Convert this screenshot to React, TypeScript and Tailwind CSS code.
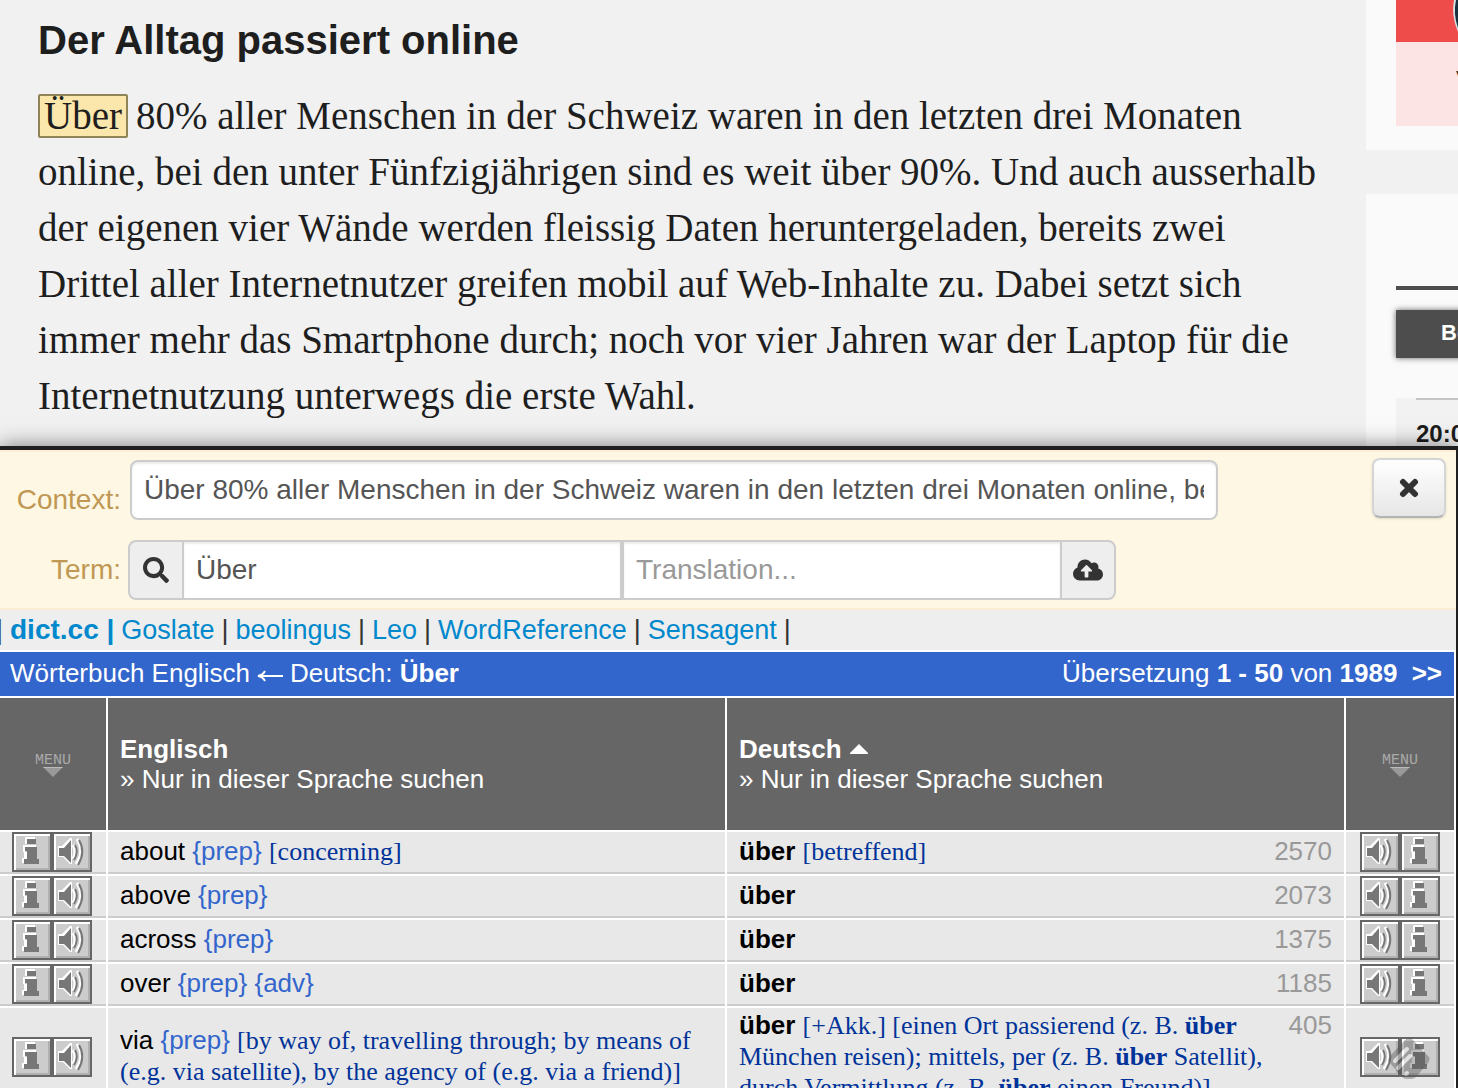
import type { ReactNode } from "react";
import { FaCloudUploadAlt, FaSearch, FaTimes } from "react-icons/fa";

const SANS = "font-['Liberation_Sans',Arial,sans-serif]";
const SERIF = "font-['Liberation_Serif','Times_New_Roman',serif]";

const article = [
  "online, bei den unter Fünfzigjährigen sind es weit über 90%. Und auch ausserhalb",
  "der eigenen vier Wände werden fleissig Daten heruntergeladen, bereits zwei",
  "Drittel aller Internetnutzer greifen mobil auf Web-Inhalte zu. Dabei setzt sich",
  "immer mehr das Smartphone durch; noch vor vier Jahren war der Laptop für die",
  "Internetnutzung unterwegs die erste Wahl.",
];

function InfoGlyph() {
  return (
    <svg viewBox="0 0 36 36" className="h-9 w-9" aria-hidden="true">
      <path d="M0 0H36V36H0Z" fill="#ccc" />
      <path d="M0 0H36V2H2V36H0Z" fill="#fff" />
      <path d="M34 2H36V36H2V34H34Z" fill="#b0b0b0" />
      <path d="M11 3H21V6H13V10H11ZM9 11H22V14H11V18H9ZM10 18H13V26H10ZM8 24H11V29H8Z" fill="#fff" />
      <path d="M13 5H22V10H13ZM11 13H23V25H25V30H10V25H13V17H11Z" fill="#777" />
    </svg>
  );
}

function SoundGlyph() {
  return (
    <svg viewBox="0 0 36 36" className="h-9 w-9" aria-hidden="true">
      <path d="M0 0H36V36H0Z" fill="#ccc" />
      <path d="M0 0H36V2H2V36H0Z" fill="#fff" />
      <path d="M34 2H36V36H2V34H34Z" fill="#b0b0b0" />
      <path d="M4 12H8L16 4H18V30H16L9 23H4Z" fill="#fff" />
      <path d="M5 14H10L17 6V29L10 22H5Z" fill="#777" />
      <path d="M19 11Q23 18 19 25M23 5Q31 18 22 30" fill="none" stroke="#fff" strokeWidth="3" />
      <path d="M21 11Q25 18 20 26M25 6Q32 18 24 31" fill="none" stroke="#777" strokeWidth="2" />
    </svg>
  );
}

function Actions({ flip = false }: { flip?: boolean }) {
  return (
    <div className={`mx-auto flex h-10 w-20 justify-between bg-[#666] p-[2px] ${flip ? "flex-row-reverse" : ""}`}>
      <button type="button" aria-label="Information"><InfoGlyph /></button>
      <button type="button" aria-label="Anhören"><SoundGlyph /></button>
    </div>
  );
}

function MenuButton() {
  return (
    <button type="button" className="mx-auto flex flex-col items-center pt-1 text-[#aaa]">
      <span className="font-['Liberation_Mono',monospace] text-[15px] leading-3">MENU</span>
      <svg viewBox="0 0 20 10" className="h-[10px] w-5" aria-hidden="true">
        <path d="M0 0H20L10 10Z" fill="#999" />
        <path d="M0 0H20L19 1H1Z" fill="#bbb" />
      </svg>
    </button>
  );
}

const Tag = ({ children }: { children: ReactNode }) => <span className="text-[#3366cc]">{children}</span>;
const Note = ({ children }: { children: ReactNode }) => (
  <span className={`${SERIF} text-[#003399]`}>{children}</span>
);

const rows: { en: ReactNode; de: ReactNode; count: number }[] = [
  { en: <>about <Tag>{"{prep}"}</Tag> <Note>[concerning]</Note></>, de: <><b>über</b> <Note>[betreffend]</Note></>, count: 2570 },
  { en: <>above <Tag>{"{prep}"}</Tag></>, de: <b>über</b>, count: 2073 },
  { en: <>across <Tag>{"{prep}"}</Tag></>, de: <b>über</b>, count: 1375 },
  { en: <>over <Tag>{"{prep} {adv}"}</Tag></>, de: <b>über</b>, count: 1185 },
  {
    en: <>via <Tag>{"{prep}"}</Tag> <Note>[by way of, travelling through; by means of (e.g. via satellite), by the agency of (e.g. via a friend)]</Note></>,
    de: <><b>über</b> <Note>[+Akk.] [einen Ort passierend (z. B. <b>über</b> München reisen); mittels, per (z. B. <b>über</b> Satellit), durch Vermittlung (z. B. <b>über</b> einen Freund)]</Note></>,
    count: 405,
  },
];

const CELL = "border-r-2 border-b-2 border-white bg-[#e8e8e8] align-middle shadow-[inset_0_-2px_0_#ccc]";
const HEAD = "h-[134px] border-r-2 border-b-2 border-white bg-[#666] text-left align-middle font-normal text-white";
const FIELD = "h-[60px] min-w-0 border-2 border-[#ccc] bg-white px-3 text-[28px] text-[#555] shadow-[inset_0_2px_2px_rgba(0,0,0,0.08)] outline-none placeholder:text-[#999]";
const ADDON = "flex h-[60px] w-14 shrink-0 items-center justify-center border-2 border-[#ccc] bg-[#eee] text-[#333]";
const LABEL = "w-[121px] shrink-0 text-right text-[28px] leading-10 text-[#c09853]";

function Sidebar() {
  return (
    <aside className="w-[92px] shrink-0 overflow-hidden whitespace-nowrap">
      <div className="h-[150px] bg-[#fafafa] pl-[30px]">
        <div className="flex h-[42px] justify-end overflow-hidden bg-[#ee4b4b]">
          <svg viewBox="0 0 6 36" className="h-9 w-[6px]" aria-hidden="true">
            <path d="M6 0H2Q-1 16 6 32Z" fill="#d7dde0" />
            <path d="M6 0H4Q1 14 6 28Z" fill="#17313f" />
          </svg>
        </div>
        <div className="h-[84px] bg-[#fce4e4] pt-5 pl-[60px] text-[22px] text-[#333]">V</div>
      </div>
      <div className="mt-11 h-[252px] bg-[#fafafa] pt-[92px] pl-[30px]">
        <div className="h-1 bg-[#4d4d4d]" />
        <button type="button" className="mt-5 block h-12 w-[200px] bg-[#4d4d4d] pb-1 pl-[45px] text-left text-[22px] font-bold text-white shadow-[0_0_6px_rgba(0,0,0,0.6)]">Bo</button>
        <div className="mt-10 bg-[#f2f2f2] pl-5">
          <div className="h-[48px] border-t-2 border-[#c4c4c4] pt-[18px] text-2xl leading-8 font-bold text-[#1c1c1c]">20:0</div>
        </div>
      </div>
    </aside>
  );
}

export default function App() {
  return (
    <div className={`flex h-screen flex-col overflow-hidden bg-[#f1f1f1] ${SANS}`}>
      <div className="flex h-[446px] shrink-0 justify-between">
        <article className="min-w-0 pt-4 pl-[38px] text-[#1e1e1e]">
          <h1 className="text-[40px] leading-[48px] font-bold">Der Alltag passiert online</h1>
          <p className={`mt-6 text-[39px] leading-[56px] whitespace-nowrap ${SERIF}`}>
            <mark className="mr-2 inline-block h-11 rounded-[2px] border-2 border-[#8f8358] bg-[#fbe6ab] px-1 leading-10 text-[#1e1e1e]">Über</mark>
            80% aller Menschen in der Schweiz waren in den letzten drei Monaten
            {article.map((line) => (
              <span key={line}><br />{line}</span>
            ))}
          </p>
        </article>
        <Sidebar />
      </div>

      <section className="relative shrink-0 border-t-4 border-r-2 border-[#202020] bg-white shadow-[0_0_20px_rgba(0,0,0,0.5)]">
        <form className="flex h-40 items-start justify-between border-y-2 border-[#fbeed5] bg-[#fdf7e3] pt-[6px] pr-[10px]">
          <div className="flex flex-col gap-5 pt-[2px]">
            <div className="flex items-center gap-[9px]">
              <label htmlFor="context" className={`${LABEL} pt-5`}>Context:</label>
              <input id="context" className={`${FIELD} w-[1088px] rounded-lg`} defaultValue="Über 80% aller Menschen in der Schweiz waren in den letzten drei Monaten online, bei den unter Fünfzigjährigen" />
            </div>
            <div className="flex items-center gap-[7px]">
              <label htmlFor="term" className={LABEL}>Term:</label>
              <div className="flex">
                <button type="button" aria-label="Search" className={`${ADDON} rounded-l-lg`}><FaSearch size={26} /></button>
                <input id="term" className={`${FIELD} -ml-[2px] w-[440px]`} defaultValue="Über" />
                <input aria-label="Translation" className={`${FIELD} w-[440px]`} placeholder="Translation..." />
                <button type="button" aria-label="Save" className={`${ADDON} -ml-[2px] rounded-r-lg`}><FaCloudUploadAlt size={30} /></button>
              </div>
            </div>
          </div>
          <button type="button" aria-label="Close" className="flex h-[60px] w-[74px] shrink-0 items-center justify-center rounded-lg border-2 border-[#d5d5d5] border-b-[#b3b3b3] bg-linear-to-b from-white to-[#e6e6e6] text-[#333] shadow-sm">
            <svg viewBox="0 0 20 20" className="h-5 w-5" aria-hidden="true">
              <path d="M4 4L16 16M16 4L4 16" stroke="currentColor" strokeWidth="6" strokeLinecap="round" />
            </svg>
          </button>
        </form>

        <nav className="flex h-10 items-center gap-[7px] bg-[#eee] text-[27px] text-[#0088cc]">
          <span className="-ml-1 text-[#333]">|</span>
          <a href="#dict" className="text-[28px] font-bold">dict.cc |</a>
          {["Goslate", "beolingus", "Leo", "WordReference", "Sensagent"].map((name) => (
            <span key={name} className="flex gap-[7px]">
              <a href={`#${name}`}>{name}</a>
              <span className="text-[#333]">|</span>
            </span>
          ))}
        </nav>

        <div className="mt-[2px] mr-[2px] mb-[2px] flex h-11 items-center justify-between bg-[#3366cc] pr-3 pb-[2px] pl-[10px] text-[26px] text-white">
          <span className="flex items-center gap-[7px]">
            Wörterbuch Englisch
            <svg viewBox="0 0 26 12" className="mt-[6px] h-3 w-[26px]" role="img" aria-label="von">
              <path d="M26 6H3M8 1Q6 5 1 6Q6 7 8 11" fill="none" stroke="#fff" strokeWidth="2" />
            </svg>
            <span>Deutsch: <b>Über</b></span>
          </span>
          <span>Übersetzung <b>1 - 50</b> von <b>1989</b> <a href="#next" className="ml-[7px] font-bold">&gt;&gt;</a></span>
        </div>

        <table className="w-full table-fixed border-separate border-spacing-0 text-[26px] leading-[30px] text-black">
          <colgroup>
            <col className="w-[108px]" />
            <col />
            <col />
            <col className="w-[110px]" />
          </colgroup>
          <thead>
            <tr>
              <th className={HEAD}><MenuButton /></th>
              <th className={`${HEAD} px-3`}><b>Englisch</b><br /><a href="#en">» Nur in dieser Sprache suchen</a></th>
              <th className={`${HEAD} px-3`}>
                <b>Deutsch</b>
                <svg viewBox="0 0 18 14" className="ml-2 inline-block h-[14px] w-[18px] align-baseline" aria-hidden="true"><path d="M9 0L18 9V10H0V9Z" fill="#fff" /></svg>
                <br /><a href="#de">» Nur in dieser Sprache suchen</a>
              </th>
              <th className={HEAD}><MenuButton /></th>
            </tr>
          </thead>
          <tbody>
            {rows.map((row) => {
              const tall = row.count === 405;
              return (
                <tr key={row.count} className={tall ? "h-[102px]" : "h-11"}>
                  <td className={`${CELL} pr-[2px] pb-[2px]`}><Actions /></td>
                  <td className={`${CELL} px-3 pb-1`}>{row.en}</td>
                  <td className={`${CELL} px-3 pb-1`}>
                    <div className="flex justify-between gap-3">
                      <span>{row.de}</span>
                      <span className="text-[#999]">{row.count}</span>
                    </div>
                  </td>
                  <td className={`${CELL} pb-[2px]`}><Actions flip /></td>
                </tr>
              );
            })}
          </tbody>
        </table>
      </section>

      <svg viewBox="0 0 42 42" className="fixed right-7 bottom-2 h-[42px] w-[42px] opacity-40" aria-hidden="true">
        <path d="M17 2Q21 -2 25 2L40 18Q43 21 40 25L28 39Q26 41 23 41H19Q16 41 14 39L2 25Q-1 21 2 18Z" fill="#555" />
        <path d="M7 23L19 11M10 30L22 18M18 36L19 35" stroke="#fff" strokeWidth="4" strokeLinecap="round" />
      </svg>
    </div>
  );
}
